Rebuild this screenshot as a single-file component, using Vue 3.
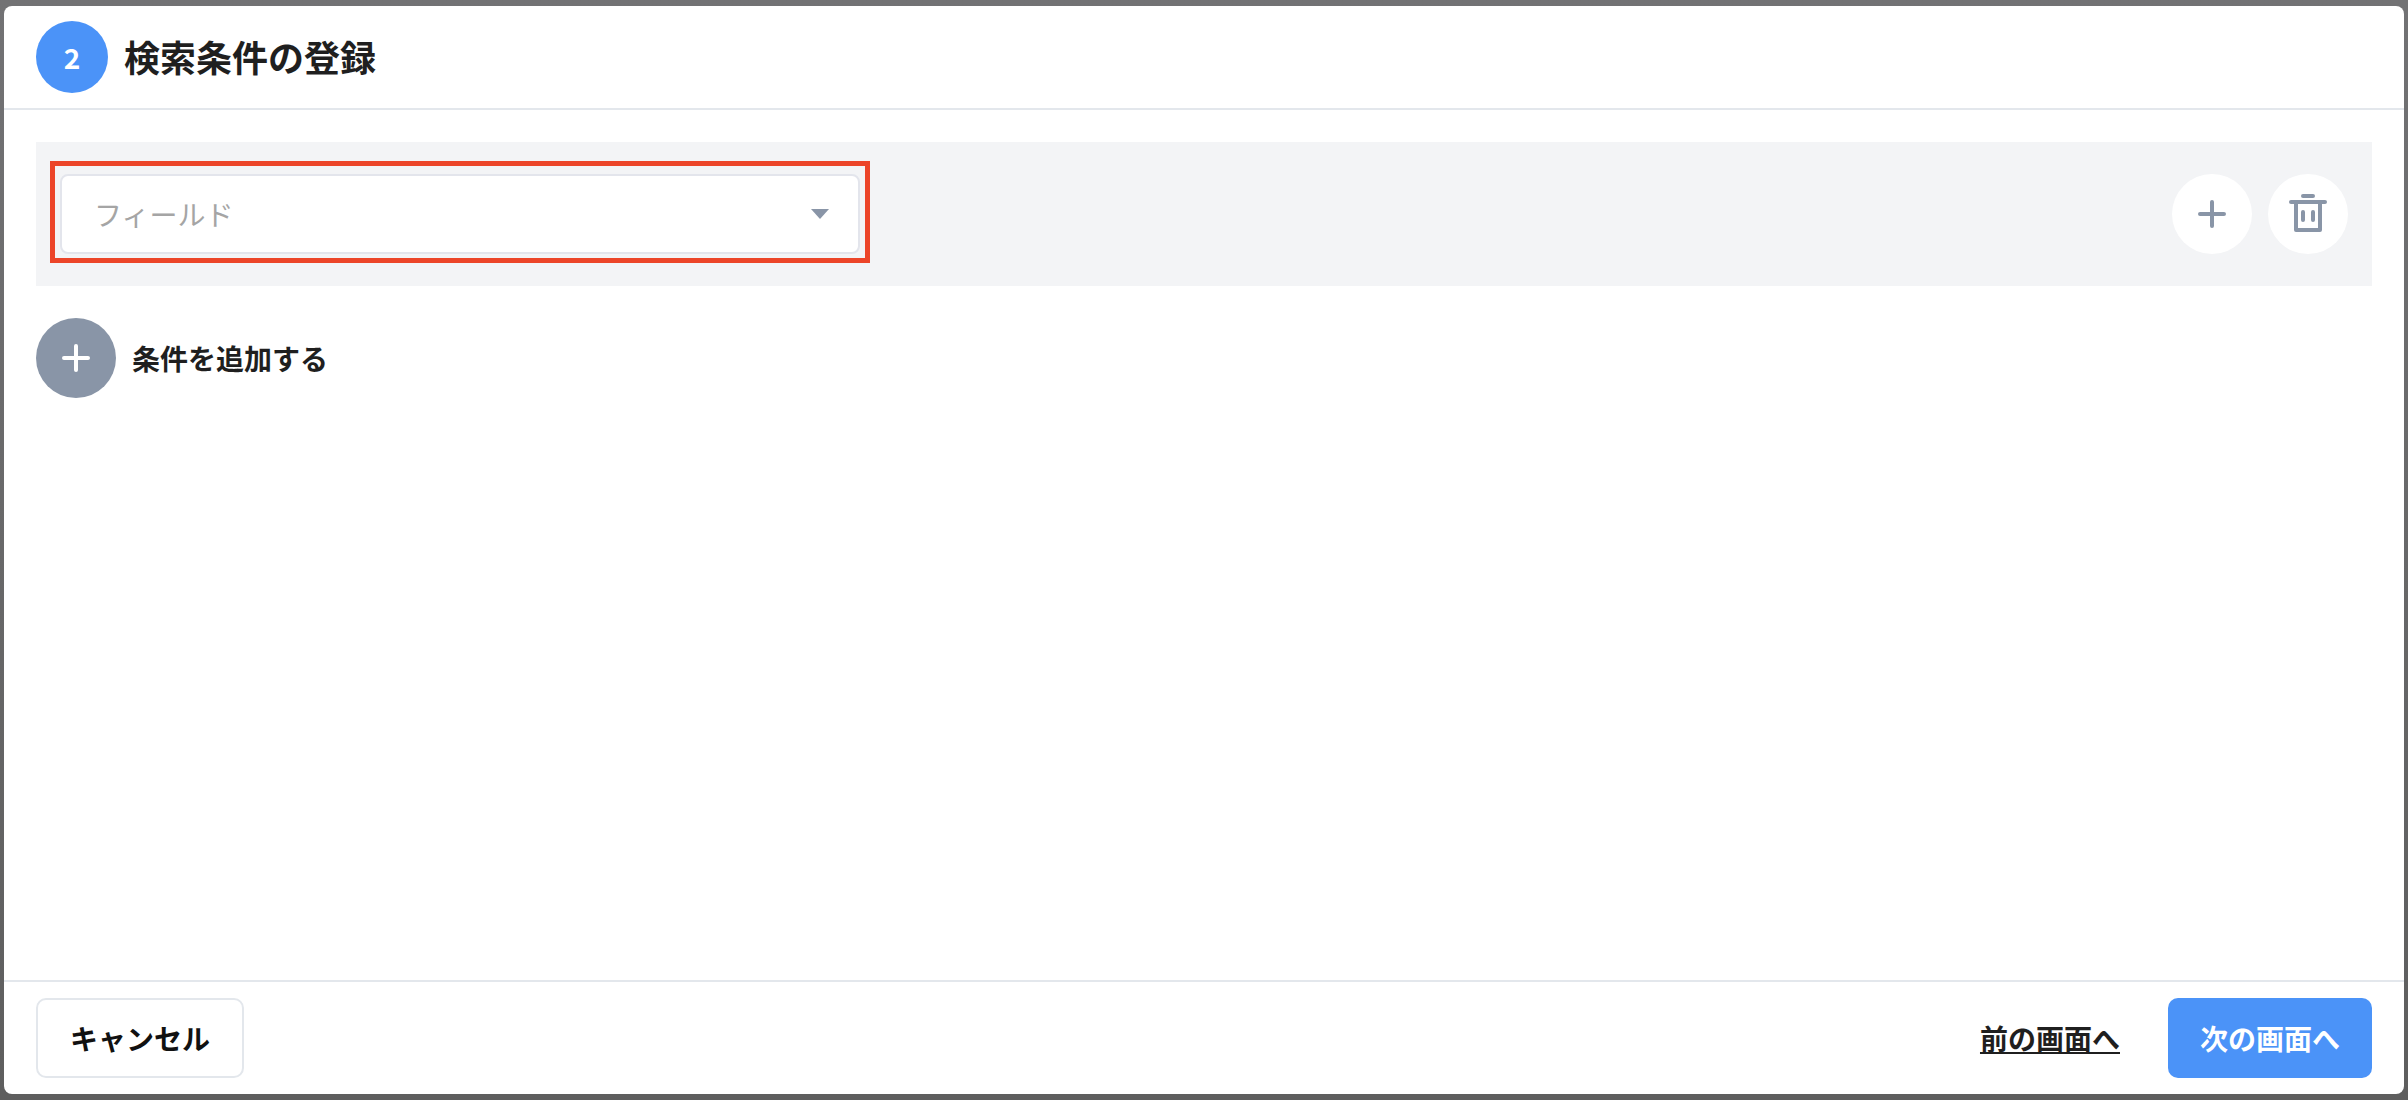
<template>
  <div class="backdrop">
    <div class="modal">
      <header class="modal-header">
        <span class="step">2</span>
        <h2>検索条件の登録</h2>
      </header>

      <main class="modal-body">
        <div class="condition-row">
          <div class="highlight">
            <div class="select">
              <span class="placeholder">フィールド</span>
              <span class="caret"></span>
            </div>
          </div>
          <div class="row-actions">
            <button class="round">
              <svg width="30" height="30" viewBox="0 0 30 30" fill="none" stroke="#8995a7" stroke-width="4" stroke-linecap="round">
                <path d="M15 3v24M3 15h24" />
              </svg>
            </button>
            <button class="round">
              <svg width="38" height="40" viewBox="0 0 38 40" fill="none" stroke="#8995a7" stroke-width="4" stroke-linecap="round">
                <path d="M14 2h10" />
                <path d="M2 8h34" />
                <path d="M7 8v28h24V8" stroke-linejoin="round" />
                <path d="M14 18v8M24 18v8" />
              </svg>
            </button>
          </div>
        </div>

        <div class="add-condition">
          <span class="add-icon">
            <svg width="30" height="30" viewBox="0 0 30 30" fill="none" stroke="#fff" stroke-width="4" stroke-linecap="round">
              <path d="M15 3v24M3 15h24" />
            </svg>
          </span>
          <span class="add-label">条件を追加する</span>
        </div>
      </main>

      <footer class="modal-footer">
        <button class="btn-cancel">キャンセル</button>
        <div class="footer-right">
          <a class="prev">前の画面へ</a>
          <button class="btn-next">次の画面へ</button>
        </div>
      </footer>
    </div>
  </div>
</template>

<script setup>
</script>

<style>
body {
  background: #6a6a6a;
}
</style>

<style scoped>
.backdrop {
  box-sizing: border-box;
  height: 1100px;
  padding: 6px 4px;
  background: linear-gradient(#727274, #5e5e5e);
  font-family: "Noto Sans CJK JP", "Noto Sans", sans-serif;
  color: #1f1f1f;
}

.modal {
  height: 1088px;
  background: #fff;
  border-radius: 8px;
  display: flex;
  flex-direction: column;
}

.modal-header {
  box-sizing: border-box;
  height: 104px;
  padding: 15px 32px 0;
  display: flex;
  align-items: flex-start;
  gap: 16px;
  border-bottom: 2px solid #e3e7ec;
}

.step {
  width: 72px;
  height: 72px;
  border-radius: 50%;
  background: #4b93f8;
  color: #fff;
  font-size: 28px;
  font-weight: 700;
  display: flex;
  align-items: center;
  justify-content: center;
}

h2 {
  margin: 0;
  font-size: 36px;
  line-height: 70px;
  font-weight: 700;
}

.modal-body {
  flex: 1;
  padding: 32px 32px 0;
}

.condition-row {
  height: 144px;
  background: #f3f4f6;
  display: flex;
  align-items: center;
  justify-content: space-between;
  padding: 0 24px 0 14px;
}

.highlight {
  box-sizing: border-box;
  width: 820px;
  height: 102px;
  margin-bottom: 4px;
  border: 5px solid #ec4529;
  padding: 8px 5px;
}

.select {
  box-sizing: border-box;
  height: 80px;
  background: #fff;
  border: 2px solid #e3e5ec;
  border-radius: 8px;
  display: flex;
  align-items: center;
  justify-content: space-between;
  padding: 0 29px 0 32px;
}

.placeholder {
  font-size: 28px;
  color: #a5a5a5;
}

.caret {
  width: 0;
  height: 0;
  border-left: 9px solid transparent;
  border-right: 9px solid transparent;
  border-top: 10px solid #8995a7;
}

.row-actions {
  display: flex;
  gap: 16px;
}

.round {
  width: 80px;
  height: 80px;
  border: none;
  border-radius: 50%;
  background: #fff;
  padding: 0;
  display: flex;
  align-items: center;
  justify-content: center;
}

.add-condition {
  margin-top: 32px;
  display: flex;
  align-items: center;
  gap: 16px;
}

.add-icon {
  width: 80px;
  height: 80px;
  border-radius: 50%;
  background: #8995a7;
  display: flex;
  align-items: center;
  justify-content: center;
}

.add-label {
  font-size: 28px;
  font-weight: 700;
}

.modal-footer {
  box-sizing: border-box;
  height: 114px;
  border-top: 2px solid #e3e7ec;
  padding: 16px 32px 0;
  display: flex;
  justify-content: space-between;
  align-items: flex-start;
}

.footer-right {
  display: flex;
  align-items: center;
  gap: 48px;
}

.btn-cancel {
  box-sizing: border-box;
  width: 208px;
  height: 80px;
  background: #fff;
  border: 2px solid #e3e7ec;
  border-radius: 10px;
  font: 700 28px "Noto Sans CJK JP", sans-serif;
  color: #111;
}

.prev {
  font-size: 28px;
  font-weight: 700;
  text-decoration: underline;
}

.btn-next {
  width: 204px;
  height: 80px;
  border: none;
  border-radius: 10px;
  background: #4b93f8;
  color: #fff;
  font: 700 28px "Noto Sans CJK JP", sans-serif;
}
</style>
